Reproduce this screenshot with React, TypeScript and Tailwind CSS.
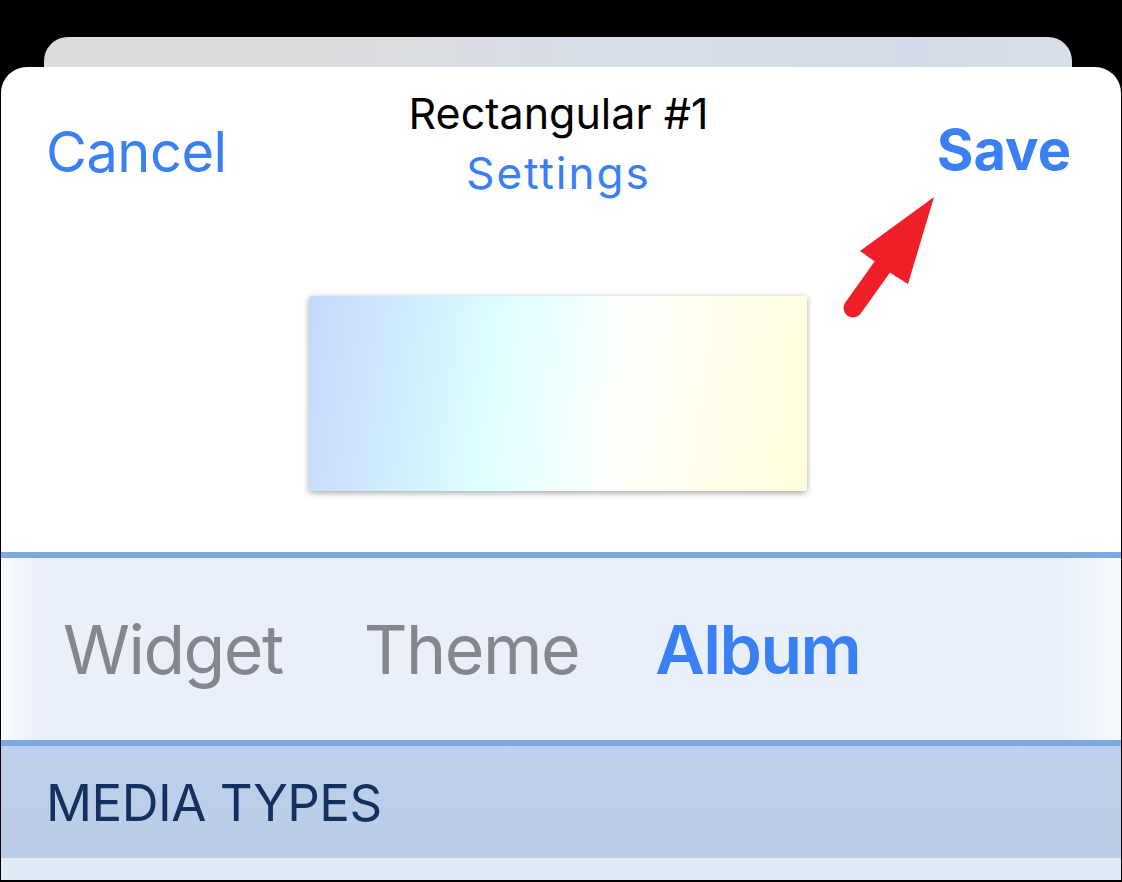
import React from 'react';

const font = { fontFamily: '"Inter", "Liberation Sans", "Noto Sans", sans-serif' };

function Arrow() {
  return (
    <svg className="absolute left-[836px] top-[126px]" width="110" height="130" viewBox="836 193 110 130">
      <path d="M882 266 L852 308" stroke="#ee1f27" strokeWidth="19" strokeLinecap="round" fill="none" />
      <polygon points="933,197 859,251 873,261 891,274 907,284" fill="#ee1f27" />
    </svg>
  );
}

export default function App() {
  return (
    <div className="w-[1122px] h-[882px] bg-black overflow-hidden flex flex-col" style={font}>
      {/* card behind */}
      <div className="mt-[37px] ml-[44px] w-[1028px] h-[30px] shrink-0 rounded-t-[24px] bg-[linear-gradient(to_right,#dcdcdd_0%,#dcdcdd_25%,#d6dee9_60%,#d3dbe8_85%,#d8dfe9_100%)]" />

      {/* sheet */}
      <div className="ml-[1px] w-[1120px] h-[813px] shrink-0 bg-white rounded-t-[26px] flex flex-col overflow-hidden">
        <div className="relative h-[485px] shrink-0">
          <div className="grid grid-cols-[1fr_auto_1fr] items-start pt-[25px] pl-[45px] pr-[50px]">
            <div className="mt-[32px] text-[56px] leading-none text-[#3a7ff3] tracking-[-0.5px]">Cancel</div>
            <div className="flex flex-col items-center">
              <div className="text-[43px] leading-none text-black">Rectangular #1</div>
              <div className="mt-[16px] text-[44px] leading-none text-[#3a7ff3] tracking-[2px]">Settings</div>
            </div>
            <div className="mt-[30px] justify-self-end text-[56px] leading-none font-bold text-[#3a7ff3]">Save</div>
          </div>

          <div className="mt-[101px] ml-[308px] w-[498px] h-[195px] rounded-[3px] shadow-[0_2px_6px_rgba(0,0,0,0.35)] bg-[linear-gradient(98deg,#c3d9fd_0%,#d3eefe_22%,#dffeff_38%,#effffe_52%,#fefffb_62%,#fffeea_82%,#fffedb_100%)]" />

          <Arrow />
        </div>

        <div className="h-[6px] shrink-0 bg-[#80a8e0]" />

        <div className="h-[182px] shrink-0 flex items-center pl-[62px] bg-[linear-gradient(to_right,#fbfcfe_0px,#e9f0fa_36px,#e9f0fa_calc(100%-60px),#f6f9fd_100%)]">
          <span className="text-[68px] leading-none text-[#85878d] tracking-[-1.5px]">Widget</span>
          <span className="ml-[81px] text-[68px] leading-none text-[#85878d] tracking-[-1.5px]">Theme</span>
          <span className="ml-[76px] text-[68px] leading-none font-semibold text-[#3a7ff3] tracking-[-1.5px]">Album</span>
        </div>

        <div className="h-[6px] shrink-0 bg-[#80a8e0]" />

        <div className="h-[112px] shrink-0 flex items-center pl-[45px] bg-[linear-gradient(to_bottom,#bdd1ec,#bacce5)]">
          <span className="text-[51px] leading-none text-[#13305f] tracking-[-0.5px]">MEDIA TYPES</span>
        </div>

        <div className="flex-1 bg-[#e1ebf7]" />
      </div>
    </div>
  );
}
